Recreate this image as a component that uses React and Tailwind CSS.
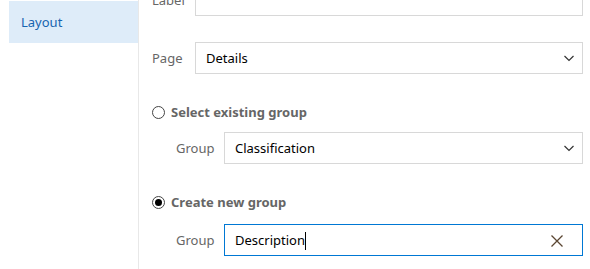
import React from "react";

function Chevron() {
  return (
    <svg width="12" height="7" viewBox="0 0 12 7" className="shrink-0 mr-[1px]">
      <path d="M1.5 1l4.5 4.5 4.5-4.5" fill="none" stroke="#333" strokeWidth="1.2" />
    </svg>
  );
}

function Radio({ checked, label }) {
  return (
    <div className="flex items-center gap-[6px] h-[24px]">
      <span className="w-[13px] h-[13px] rounded-full border border-[#444] flex items-center justify-center bg-white">
        {checked && <span className="w-[7px] h-[7px] rounded-full bg-black" />}
      </span>
      <span className="font-bold text-[13px] text-[#666] pt-[1px]">{label}</span>
    </div>
  );
}

function Field({ label, labelW, children, focused }) {
  return (
    <div className="flex items-center">
      <span className={`${labelW} text-[13px] text-[#666] shrink-0 pt-[1px]`}>{label}</span>
      <div
        className={`flex-1 h-[32px] flex items-center justify-between pl-[10px] pr-[6px] bg-white border ${
          focused ? "border-[#0078d4]" : "border-[#d8d8d8]"
        }`}
      >
        {children}
      </div>
    </div>
  );
}

export default function App() {
  return (
    <div
      className="w-[590px] h-[269px] overflow-hidden flex bg-white"
      style={{ fontFamily: '"Segoe UI", "Noto Sans", sans-serif' }}
    >
      {/* Sidebar */}
      <div className="w-[138px] shrink-0 pl-[9px] pt-[1px]">
        <div className="h-[42px] bg-[#deecf9] flex items-center pl-[12px] pt-[1px] text-[13px] text-[#1664b0]">
          Layout
        </div>
      </div>
      <div className="w-px bg-[#e8e8e8] shrink-0" />

      {/* Form */}
      <div className="flex-1 pl-[13px] pr-[7px] -mt-[16px] flex flex-col">
        <Field label="Label" labelW="w-[43px]" />

        <div className="mt-[26px]">
          <Field label="Page" labelW="w-[43px]">
            <span className="text-[13px] text-black pt-[2px]">Details</span>
            <Chevron />
          </Field>
        </div>

        <div className="mt-[26px]">
          <Radio label="Select existing group" />
        </div>
        <div className="mt-[8px] pl-[24px]">
          <Field label="Group" labelW="w-[48px]">
            <span className="text-[13px] text-black pt-[2px]">Classification</span>
            <Chevron />
          </Field>
        </div>

        <div className="mt-[26px]">
          <Radio checked label="Create new group" />
        </div>
        <div className="mt-[10px] pl-[24px]">
          <Field label="Group" labelW="w-[48px]" focused>
            <span className="text-[13px] text-black flex items-center pt-[2px]">
              Description
              <span className="w-px h-[18px] bg-black" />
            </span>
            <svg width="14" height="14" viewBox="0 0 14 14" className="mr-[12px] mt-[1px]">
              <path d="M1.5 1.5l11 11M12.5 1.5l-11 11" stroke="#5a4632" strokeWidth="1.3" />
            </svg>
          </Field>
        </div>
      </div>
    </div>
  );
}
